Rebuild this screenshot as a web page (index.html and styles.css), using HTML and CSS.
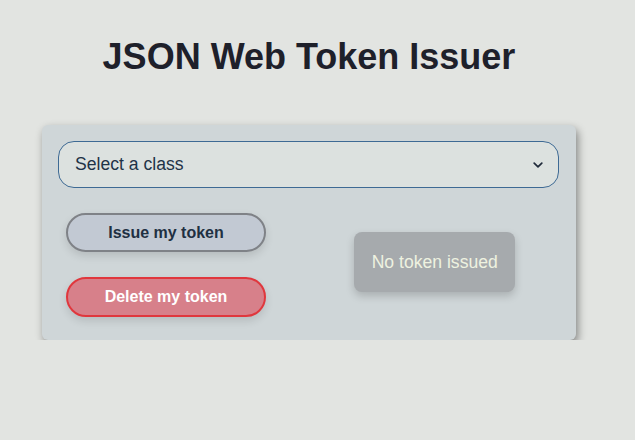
FILE: index.html
```html
<!DOCTYPE html>
<html lang="en">
<head>
<meta charset="utf-8">
<title>JSON Web Token Issuer</title>
<link rel="stylesheet" href="styles.css">
</head>
<body>
<main class="page">
  <h1 class="title">JSON Web Token Issuer</h1>
  <section class="card">
    <div class="select" role="combobox" aria-label="class">
      <span class="select-text">Select a class</span>
      <svg class="chevron" width="10" height="6" viewBox="0 0 10 6" aria-hidden="true">
        <path d="M1.2 1.2 L5 4.8 L8.8 1.2" fill="none" stroke="#1f2a3a" stroke-width="1.7" stroke-linecap="round" stroke-linejoin="round"/>
      </svg>
    </div>
    <div class="row">
      <div class="actions">
        <button class="btn btn-issue">Issue my token</button>
        <button class="btn btn-delete">Delete my token</button>
      </div>
      <div class="status">
        <div class="token-box">No token issued</div>
      </div>
    </div>
  </section>
</main>
</body>
</html>
```

FILE: styles.css
```css
html, body {
  margin: 0;
  padding: 0;
  background: #e2e4e1;
  font-family: "Liberation Sans", Arial, Helvetica, sans-serif;
}

.page {
  width: 618px;
  padding-top: 36px;
  display: flex;
  flex-direction: column;
  align-items: center;
}

.title {
  margin: 0;
  font-size: 36px;
  line-height: 41px;
  font-weight: 700;
  color: #1e202a;
}

.card {
  box-sizing: border-box;
  width: 534px;
  margin-top: 48px;
  padding: 16px 17px 23px 16px;
  background: #cfd6d8;
  border-radius: 6px;
  box-shadow: 2px 4px 8px rgba(0, 0, 0, 0.42);
}

.select {
  box-sizing: border-box;
  height: 47px;
  display: flex;
  align-items: center;
  justify-content: space-between;
  padding: 0 15px 0 16px;
  background: #dce1df;
  border: 1px solid #3e6a94;
  border-radius: 16px;
  color: #1f3347;
  font-size: 17.6px;
}

.chevron {
  display: block;
}

.row {
  display: grid;
  grid-template-columns: 1fr 1fr;
  align-items: center;
  margin-top: 25px;
}

.actions {
  display: flex;
  flex-direction: column;
  gap: 25px;
  padding-left: 8px;
}

.btn {
  box-sizing: border-box;
  width: 200px;
  font-family: "Liberation Sans", Arial, Helvetica, sans-serif;
  font-size: 16px;
  font-weight: 700;
  border-radius: 20px;
  border: 2px solid;
  box-shadow: 0 4px 8px rgba(0, 0, 0, 0.12);
  cursor: pointer;
  padding: 0;
}

.btn-issue {
  height: 39px;
  background: #c2c9d3;
  border-color: #7f8287;
  color: #1f3042;
}

.btn-delete {
  height: 40px;
  background: #d7808a;
  border-color: #e0373d;
  color: #ffffff;
}

.status {
  display: flex;
  justify-content: center;
  padding-left: 2px;
}

.token-box {
  box-sizing: border-box;
  width: 161px;
  height: 60px;
  margin-bottom: 6px;
  display: flex;
  align-items: center;
  justify-content: center;
  background: #a6aaad;
  color: #eef2e0;
  font-size: 17.6px;
  border-radius: 8px;
  box-shadow: 0 4px 8px rgba(0, 0, 0, 0.18);
}
```
